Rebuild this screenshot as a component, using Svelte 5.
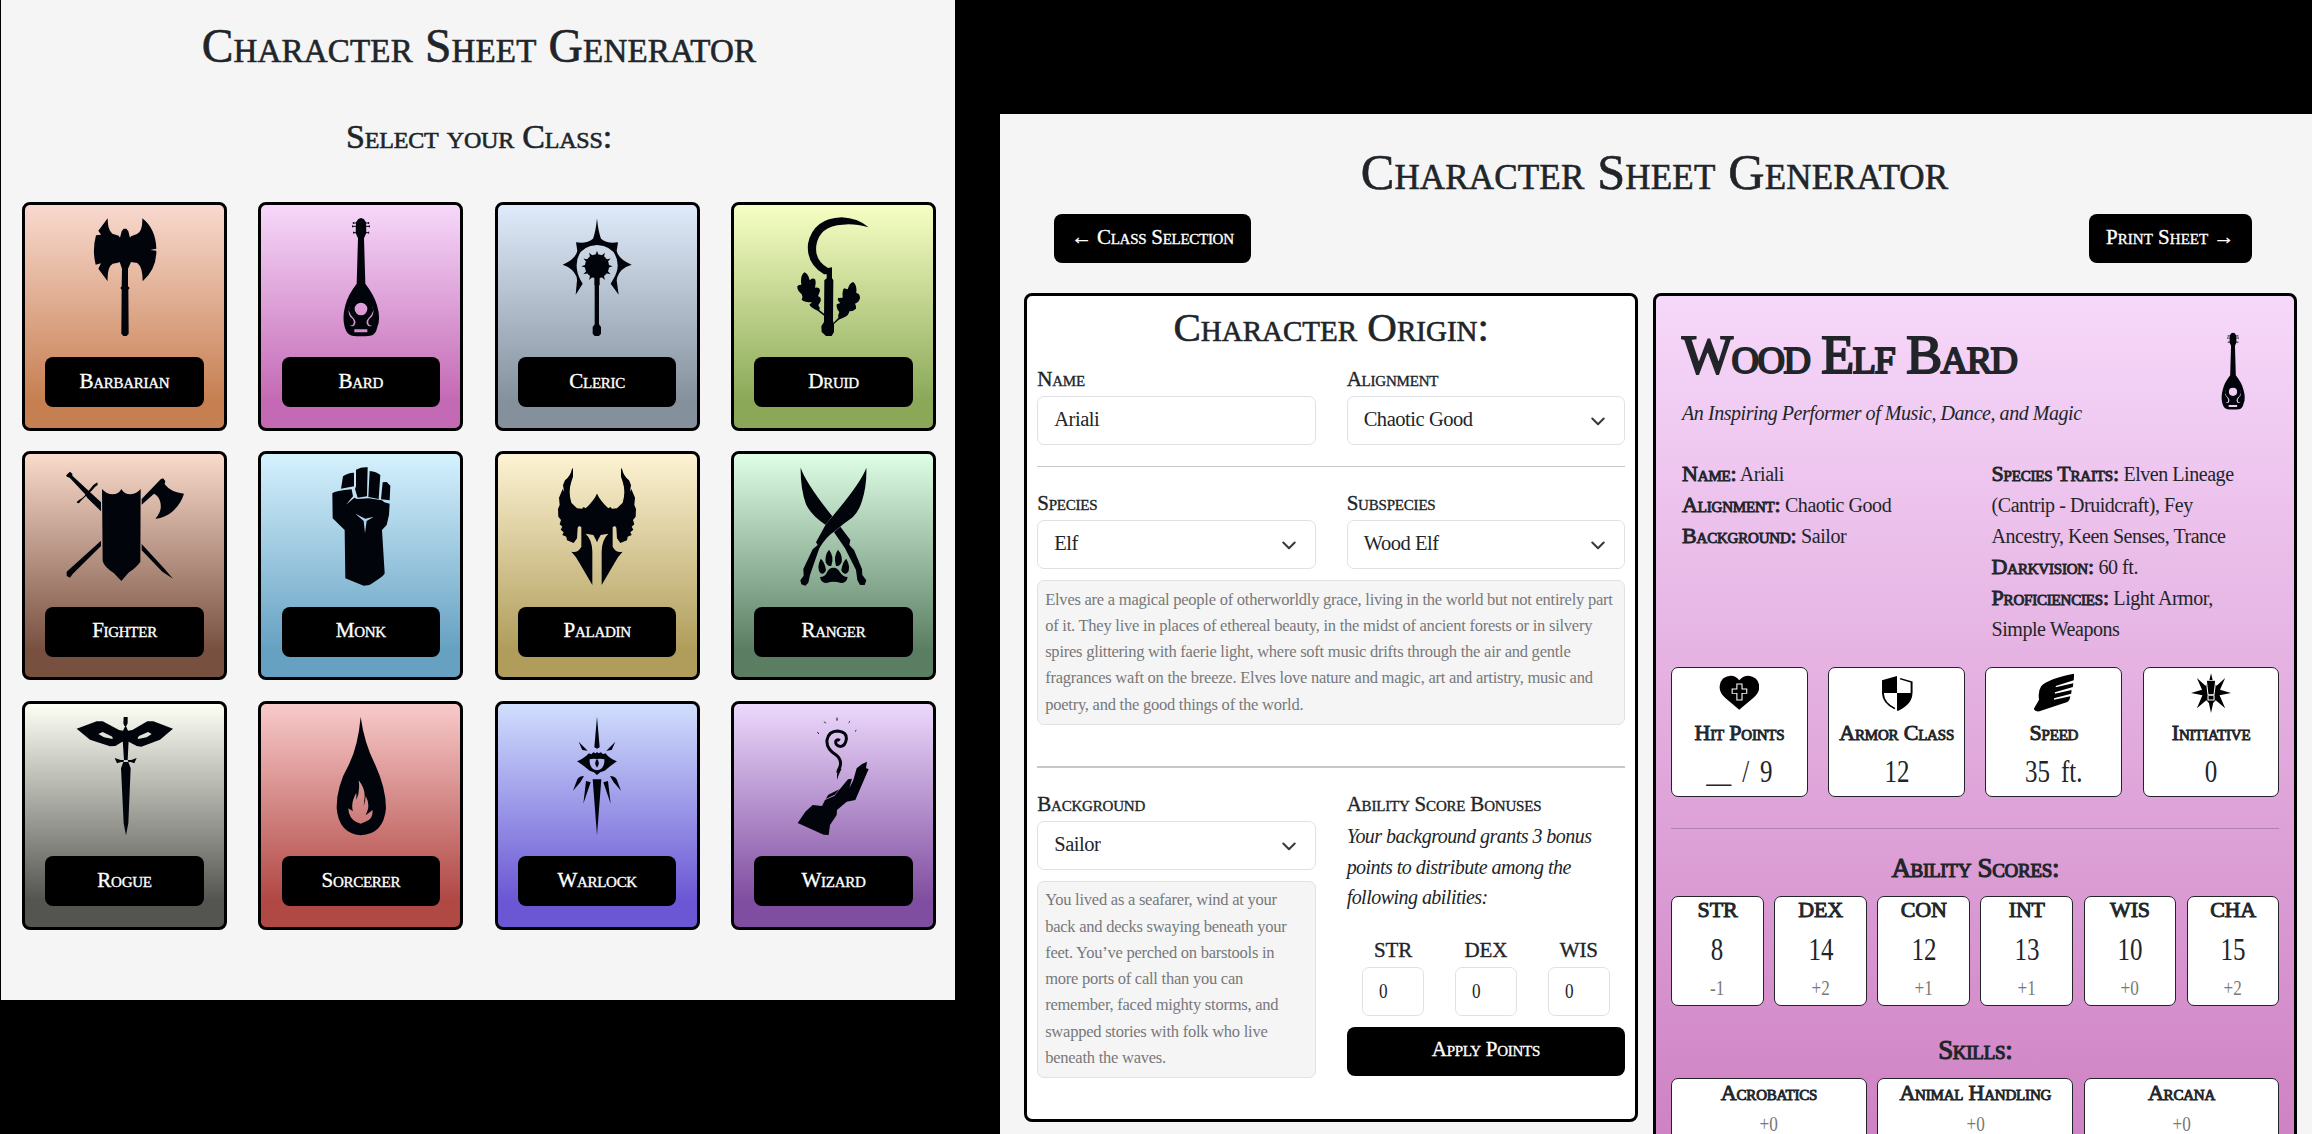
<script>
  const classes = [
    { id: 'barbarian', name: 'Barbarian', box: '133 50 360 360' },
    { id: 'bard', name: 'Bard', box: '842 50 360 360' },
    { id: 'cleric', name: 'Cleric', box: '142 50 360 360' },
    { id: 'druid', name: 'Druid', box: '851 50 360 360' },
    { id: 'fighter', name: 'Fighter', box: '133 33 360 360' },
    { id: 'monk', name: 'Monk', box: '842 33 360 360' },
    { id: 'paladin', name: 'Paladin', box: '142 33 360 360' },
    { id: 'ranger', name: 'Ranger', box: '851 33 360 360' },
    { id: 'rogue', name: 'Rogue', box: '133 48 360 360' },
    { id: 'sorcerer', name: 'Sorcerer', box: '842 48 360 360' },
    { id: 'warlock', name: 'Warlock', box: '142 48 360 360' },
    { id: 'wizard', name: 'Wizard', box: '851 48 360 360' }
  ];

  // Spiked head of the cleric's mace: a thin thorn every 30 degrees.
  const onMace = (angle, r) =>
    `${(322 + r * Math.sin(angle)).toFixed(1)},${(198 - r * Math.cos(angle)).toFixed(1)}`;
  const mace = Array.from({ length: 12 }, (_, i) => {
    const a = (i * Math.PI) / 6;
    return [onMace(a - 0.13, 34), onMace(a, 47), onMace(a + 0.13, 34)].join(' ');
  }).join(' ');

  const speciesText = [
    'Elves are a magical people of otherworldly grace, living in the world but not entirely part',
    'of it. They live in places of ethereal beauty, in the midst of ancient forests or in silvery',
    'spires glittering with faerie light, where soft music drifts through the air and gentle',
    'fragrances waft on the breeze. Elves love nature and magic, art and artistry, music and',
    'poetry, and the good things of the world.'
  ];
  const backgroundText = [
    'You lived as a seafarer, wind at your',
    'back and decks swaying beneath your',
    'feet. You’ve perched on barstools in',
    'more ports of call than you can',
    'remember, faced mighty storms, and',
    'swapped stories with folk who live',
    'beneath the waves.'
  ];
  const stats = [
    { icon: 'hp', box: '185.3 100 93.3 120', label: 'Hit Points', value: '__ / 9' },
    { icon: 'ac', box: '553.3 100 93.3 120', label: 'Armor Class', value: '12' },
    { icon: 'speed', box: '919.3 100 93.3 120', label: 'Speed', value: '35 ft.' },
    { icon: 'init', box: '1286.3 100 93.3 120', label: 'Initiative', value: '0' }
  ];
  const abilities = [
    ['STR', '8', '-1'],
    ['DEX', '14', '+2'],
    ['CON', '12', '+1'],
    ['INT', '13', '+1'],
    ['WIS', '10', '+0'],
    ['CHA', '15', '+2']
  ];
  const skills = [
    ['Acrobatics', '+0'],
    ['Animal Handling', '+0'],
    ['Arcana', '+0']
  ];
</script>

{#snippet emblem(id, box)}
  <svg class="emblem" viewBox={box} fill-rule="evenodd" aria-hidden="true">
    {#if id === 'barbarian'}
      <path d="M261 54L233 91L241 103L226 105Q214 150 225 193L241 189L233 205L261 243Q259 200 276 190L292 187L297 185L304 205L303 258L299 263L303 268L302 400L308 407H318L324 400L323 268L327 263L322 258V205L331 185L350 188Q366 200 366 243Q408 205 407 151L389 149L407 145Q405 85 365 54Q366 95 349 101L331 108L328 112L323 93L317 85H309L303 93L298 112L294 106L275 100Q261 90 261 54Z" />
    {:else if id === 'bard'}
      <path d="M1022 53L1030 56L1037 66L1038 98L1031 114L1035 250Q1062 285 1070 315Q1082 355 1071 380Q1066 405 1050 406Q1022 409 995 406Q980 404 973 380Q965 350 975 315Q982 285 1009 250L1013 114L1006 98L1007 66L1014 56ZM1003 326a19 19 0 1 0 38 0a19 19 0 1 0-38 0ZM1002 387h39v9h-39ZM991 319Q983 320 986 333Q990 346 1001 355Q1010 366 1001 376Q993 380 988 375Q996 377 999 371Q1003 362 995 354Q983 344 985 328Q986 320 991 319ZM1053 319Q1061 320 1058 333Q1054 346 1043 355Q1034 366 1043 376Q1051 380 1056 375Q1048 377 1045 371Q1041 362 1049 354Q1061 344 1059 328Q1058 320 1053 319Z" />
      <path class="line thin" d="M999 68h46M999 65v6M1045 65v6M997 78h50M997 75v6M1047 75v6M1000 97h44M1000 94v6M1045 94v6" />
    {:else if id === 'cleric'}
      <path d="M322 54Q326 95 334 115Q352 131 385 126L381 152Q388 178 426 193Q392 203 383 230L381 240L387 283L363 250L370 238Q385 215 384 193Q381 138 322 134Q263 138 261 193Q260 215 272 238L279 250L258 283L262 240L261 230Q250 203 219 193Q256 178 263 152L259 126Q292 131 310 115Q318 95 322 54Z" />
      <polygon points={mace} />
      <circle cx="322" cy="198" r="36" />
      <path d="M314 225H330V255H328V372L334 380V400L328 407H315L309 400V380L315 372V255H314Z" />
    {:else if id === 'druid'}
      <path d="M1138 81Q1105 53 1057 51Q972 54 956 130Q950 190 1004 222H1012V234L1005 240L1004 365L996 378L997 395L1010 407H1027L1034 395V370L1031 362L1032 240L1028 233V201L1016 203Q975 180 981 135Q990 77 1060 73Q1095 69 1138 81Z" />
      <path d="M945 216Q957 220 961 240Q970 230 978 238Q981 248 977 262Q992 260 992 272L986 288Q996 290 994 303L987 315Q993 322 990 329L1006 342L1004 346L985 331Q965 322 960 313L968 306Q945 306 937 298Q942 290 937 282Q922 270 924 258Q928 252 936 254Q932 225 945 216Z" />
      <path d="M1092 245Q1104 255 1101 278Q1112 280 1112 293Q1110 305 1097 310Q1102 318 1100 325Q1092 333 1080 333Q1078 346 1065 351L1048 358L1034 371L1033 367L1047 352Q1045 344 1050 335Q1040 325 1042 312L1053 308Q1043 300 1046 293L1060 292Q1058 272 1064 264L1075 267Q1080 248 1092 245Z" />
    {:else if id === 'fighter'}
      <path d="M244 102Q258 118 275 118Q295 118 302 102Q310 118 330 118Q348 116 360 102L359 320Q350 335 325 352L302 378L280 355Q250 335 246 318Z" />
      <path d="M137 60L148 50L155 56V62L241 142V169L200 129L192 116L147 68L138 65Z" />
      <path d="M168 141L175 135Q188 130 200 112Q212 98 218 90L230 82L231 90Q222 95 215 105L180 138Q178 146 170 144Z" />
      <path d="M363 267L430 340L457 371L425 350L363 286ZM241 257L138 350V363L148 368L156 357L241 273ZM363 132L420 73L427 70L434 78L432 88Q450 112 490 116Q480 150 450 174Q428 190 404 191Q428 165 417 135Q410 120 400 116L363 149Z" />
    {:else if id === 'monk'}
      <path d="M968 64Q985 52 1001 53V94L962 101ZM1007 44Q1025 35 1042 37L1040 124L1012 128L1004 102L1007 94ZM1048 48Q1068 50 1080 60L1075 132L1044 126ZM1087 82L1099 81L1110 92L1108 136L1082 133Z" />
      <path d="M936 115Q945 107 994 103L998 124L977 149L1002 128L1010 132L1045 130L1085 136L1092 142L1108 146L1106 180L1099 210L1085 225L1093 355Q1090 365 1047 390L1030 392L975 370L973 225L937 190ZM1005 176L1035 191L1060 185L1039 198L1034 235L1030 198Z" />
    {:else if id === 'paladin'}
      {#each ['', 'matrix(-1 0 0 1 644 0)'] as flip}
        <path transform={flip} d="M323 117H322Q310 140 288 160L282 156L277 161L262 160L245 143Q235 110 245 80L250 65V38L246 44Q244 60 226 76L220 90L223 110L219 102L208 128L210 150L205 162L206 185L214 195L210 208L218 215L213 224L222 232L218 240L230 245L232 256L252 264L262 250L264 218L268 213L275 216L275 275Q265 295 245 290Q260 305 268 322L308 390V290Q308 255 288 236L311 240L322 260H323Z" />
      {/each}
    {:else if id === 'ranger'}
      <path d="M934 38Q950 85 1029 184L1008 209Q965 180 950 148Q933 100 934 38ZM1034 232L1053 215L1083 255L1080 270L1094 285L1118 342L1119 360L1131 376L1126 390L1112 390L1104 375L1100 345L1067 280Z" />
      <path d="M1131 38Q1115 85 1010 207L980 262L985 270L970 283L942 342L943 362L933 376L936 388L948 392L957 383L962 360L990 280Q1010 245 1037 228Q1060 208 1090 187Q1108 170 1118 138Q1133 90 1131 38Z" />
      <path d="M1019 284Q1036 305 1026 332Q1015 336 1009 322Q1006 300 1019 284ZM1046 284Q1060 300 1057 322Q1050 336 1040 332Q1031 305 1046 284ZM994 311Q1006 320 1010 345Q1004 360 994 355Q980 340 994 311ZM1071 311Q1087 340 1073 355Q1062 360 1056 345Q1060 320 1071 311Z" />
      <path d="M1032 338Q1046 338 1052 352Q1060 366 1075 366Q1072 384 1055 384Q1032 377 1012 384Q995 384 992 366Q1008 366 1013 352Q1018 338 1032 338Z" />
    {:else if id === 'rogue'}
      <path d="M168 86L228 64L246 64L295 90L307 92L315 76L322 92L335 90L380 64L398 64L457 86L418 119L362 140L348 138L324 125H305L284 138L268 139L208 119ZM233 102L246 96L275 110L276 117L250 112ZM351 114L355 108L382 96L393 102L378 112L352 117Z" />
      <path d="M309 51H321V70L317 78H311L308 70ZM306 120H324L321 180L330 205L323 370L316 406L309 370L301 205L310 180ZM282 174L300 180H332L348 174L341 190L330 186H301L289 190Z" />
    {:else if id === 'sorcerer'}
      <path d="M1021 51Q1032 130 1065 195Q1097 265 1097 325Q1090 403 1021 406Q955 400 949 325Q948 260 985 195Q1013 140 1021 51ZM1015 241Q1034 265 1033 290L1030 318Q1036 300 1036 288Q1048 310 1042 330L1036 346L1057 330Q1058 360 1035 365L1021 371L1008 366Q985 355 984 325L998 334Q990 310 1008 278L1008 300Q1020 275 1015 241Z" />
    {:else if id === 'warlock'}
      <path d="M322 50L330 142L322 146L314 142ZM262 184Q280 178 298 160L305 163L311 157L318 160L322 156L327 160L334 157L340 163L347 160Q362 178 382 184Q365 195 345 212Q330 215 322 225Q314 215 300 212Q280 195 262 184ZM300 178Q298 207 322 211Q346 207 344 178Q335 175 322 177Q308 175 300 178ZM322 176Q333 190 322 203Q311 190 322 176ZM309 238H335L322 406Z" />
      {#each ['', 'matrix(-1 0 0 1 644 0)'] as flip}
        <path transform={flip} d="M267 125L294 152L278 150ZM283 228L272 247L250 272L263 238Q270 228 283 228ZM289 243L303 247L281 311Z" />
      {/each}
    {:else if id === 'wizard'}
      <path class="line curl" d="M1045 218Q1046 212 1052 200Q1058 180 1042 166Q1010 148 1013 120Q1018 93 1045 93Q1073 95 1071 118Q1067 141 1051 139Q1036 135 1040 122Q1045 116 1051 122" />
      <path d="M1048 206Q1040 225 1044 239Q1046 226 1057 206Z" />
      <path class="line thin" d="M1043 53V62M1005 65l4 5M1082 64l-4 4M984 97l5 4M1101 91l-4 3" />
      <path d="M925 369L948 335L970 315L998 318L1007 300L1035 288L1050 269L1076 238L1088 236L1080 265L1092 240L1102 205L1117 193L1133 185L1130 205L1138 207L1128 230L1098 300L1072 305L1043 330L1042 345L1022 375L1018 405L1003 404Z" />
      <path d="M1009 297L1017 284L1050 268L1036 284Z" />
    {/if}
  </svg>
{/snippet}

{#snippet chevron()}
  <svg class="chevron" viewBox="0 0 14 9" aria-hidden="true"><path d="M1.3 1.5L7 7.3L12.7 1.5" /></svg>
{/snippet}

<div class="page">
  <section class="picker">
    <h1>Character Sheet Generator</h1>
    <h2>Select your Class:</h2>
    <div class="classes">
      {#each classes as c}
        <article class="class-card {c.id}">
          {@render emblem(c.id, c.box)}
          <button>{c.name}</button>
        </article>
      {/each}
    </div>
  </section>

  <section class="builder">
    <h1>Character Sheet Generator</h1>
    <nav>
      <button>← Class Selection</button>
      <button class="print">Print Sheet →</button>
    </nav>
    <main>
      <form class="origin">
        <h2>Character Origin:</h2>
        <div class="pair">
          <div>
            <span class="label">Name</span>
            <div class="field"><span>Ariali</span></div>
          </div>
          <div>
            <span class="label">Alignment</span>
            <div class="field"><span>Chaotic Good</span>{@render chevron()}</div>
          </div>
        </div>
        <hr />
        <div class="pair">
          <div>
            <span class="label">Species</span>
            <div class="field"><span>Elf</span>{@render chevron()}</div>
          </div>
          <div>
            <span class="label">Subspecies</span>
            <div class="field"><span>Wood Elf</span>{@render chevron()}</div>
          </div>
        </div>
        <div class="note">
          {#each speciesText as line}<p>{line}</p>{/each}
        </div>
        <hr class="far" />
        <div class="pair">
          <div>
            <span class="label">Background</span>
            <div class="field"><span>Sailor</span>{@render chevron()}</div>
            <div class="note tall">
              {#each backgroundText as line}<p>{line}</p>{/each}
            </div>
          </div>
          <div>
            <span class="label">Ability Score Bonuses</span>
            <div class="hint">
              <p>Your background grants 3 bonus</p>
              <p>points to distribute among the</p>
              <p>following abilities:</p>
            </div>
            <div class="bonuses">
              {#each ['STR', 'DEX', 'WIS'] as a}
                <div class="bonus">
                  <span class="label">{a}</span>
                  <div class="field"><span class="digit">0</span></div>
                </div>
              {/each}
            </div>
            <button type="button" class="apply">Apply Points</button>
          </div>
        </div>
      </form>

      <article class="sheet">
        <header>
          <div>
            <h2>Wood Elf Bard</h2>
            <p class="tagline">An Inspiring Performer of Music, Dance, and Magic</p>
          </div>
          {@render emblem('bard', '842 50 360 360')}
        </header>
        <div class="facts">
          <div>
            <p><b>Name:</b> Ariali</p>
            <p><b>Alignment:</b> Chaotic Good</p>
            <p><b>Background:</b> Sailor</p>
          </div>
          <div>
            <p><b>Species Traits:</b> Elven Lineage</p>
            <p>(Cantrip - Druidcraft), Fey</p>
            <p>Ancestry, Keen Senses, Trance</p>
            <p><b>Darkvision:</b> 60 ft.</p>
            <p><b>Proficiencies:</b> Light Armor,</p>
            <p>Simple Weapons</p>
          </div>
        </div>
        <div class="stats">
          {#each stats as s}
            <div class="tile stat">
              <svg viewBox={s.box} preserveAspectRatio="none" aria-hidden="true">
                {#if s.icon === 'hp'}
                  <path d="M232.5 210L200 175Q185 158 187 138Q190 110 212 108Q226 108 232.5 122Q240 108 254 108Q277 112 279 138Q281 158 265 175Z" />
                  <path class="cut" d="M227 133h12v15h11v13h-11v20h-12v-20h-11v-13h11z" />
                {:else if s.icon === 'ac'}
                  <path d="M600 109L565 122V160H600ZM600 160H636Q636 193 603 213H600Z" />
                  <path class="rim" d="M607 117L634 127V160M567 160Q568 190 595 207" />
                {:else if s.icon === 'speed'}
                  <path d="M1013 102Q950 118 936 140Q928 155 931 180L919 207Q920 217 932 215L990 190Q1003 188 1004 170L966 180V176L1006 162L1007 151L968 162V158L1010 142L1011 131L970 143V139L1012 122Z" />
                {:else}
                  <path d="M1333 101L1338 128L1346 138L1366 115L1354 150L1380 160L1353 167L1366 206L1344 182L1338 190L1333 220L1328 190L1322 182L1300 206L1313 167L1286 160L1312 150L1300 115L1320 138L1328 128Z" />
                  <path class="cut" d="M1322 122h22l-4 43h-14zM1326 168h14v13h-14z" />
                {/if}
              </svg>
              <b>{s.label}</b>
              <span class="value">{s.value}</span>
            </div>
          {/each}
        </div>
        <hr />
        <h3>Ability Scores:</h3>
        <div class="abilities">
          {#each abilities as [name, score, mod]}
            <div class="tile ability">
              <b>{name}</b>
              <span class="value">{score}</span>
              <span class="mod">{mod}</span>
            </div>
          {/each}
        </div>
        <h3 class="skills-title">Skills:</h3>
        <div class="skills">
          {#each skills as [name, mod]}
            <div class="tile skill">
              <b>{name}</b>
              <span class="mod">{mod}</span>
            </div>
          {/each}
        </div>
      </article>
    </main>
  </section>
</div>

<style>
  :global(body) {
    background: #000;
    overflow: hidden;
  }
  .page {
    display: flex;
    align-items: flex-start;
    box-sizing: border-box;
    width: 2312px;
    height: 1134px;
    padding-left: 1px;
    overflow: hidden;
    background: #000;
    color: #212529;
    font-family: 'Liberation Serif', serif;
    font-size: 20px;
    letter-spacing: -0.45px;
    white-space: nowrap;
  }
  .page :global(*) {
    box-sizing: border-box;
  }
  h1, h2, h3, p {
    margin: 0;
    font-weight: 400;
  }
  h1, h2, h3, b, button, .label {
    font-variant: small-caps;
    letter-spacing: -0.2px;
    -webkit-text-stroke: 0.35px currentColor;
  }
  h1, h2, h3 {
    text-align: center;
  }
  h1, .picker h2, .origin h2 {
    letter-spacing: 0;
    -webkit-text-stroke-width: 0.6px;
  }
  button {
    height: 49px;
    border: 0;
    border-radius: 8px;
    padding: 0 17px 2.5px;
    background: #000;
    color: #fff;
    font-family: inherit;
    font-size: 21px;
    letter-spacing: -0.28px;
  }
  hr {
    width: 100%;
    height: 1.5px;
    border: 0;
    margin: 20.8px 0 23px;
    background: #c7c8c9;
  }

  .picker {
    flex: none;
    width: 954px;
    height: 1000px;
    padding: 16px 19px 0 21px;
    background: #f5f5f5;
  }
  .picker h1 {
    font-size: 47.5px;
    letter-spacing: 0.18px;
    line-height: 60px;
  }
  .picker h2 {
    margin: 41px 0 45px;
    font-size: 34px;
    letter-spacing: -0.2px;
    line-height: 40px;
  }
  .classes {
    display: grid;
    grid-template-columns: repeat(4, 205px);
    justify-content: space-between;
    row-gap: 20.7px;
  }
  .class-card {
    display: flex;
    flex-direction: column;
    align-items: center;
    height: 228.8px;
    border: 3px solid #000;
    border-radius: 8px;
    padding-top: 12px;
    background: linear-gradient(var(--from), var(--to) 88%);
  }
  .emblem {
    width: 120px;
    height: 120px;
    fill: #02040c;
  }
  .line {
    fill: none;
    stroke: #02040c;
  }
  .thin {
    stroke-width: 3;
  }
  .curl {
    stroke-width: 9;
  }
  .class-card button {
    width: 158.6px;
    height: 50px;
    margin-top: 20.3px;
  }
  .barbarian { --from: #f8d9cf; --to: #c67f50; }
  .bard { --from: #f6d8fa; --to: #c469b4; }
  .cleric { --from: #dfebfa; --to: #84909c; }
  .druid { --from: #f7ffc4; --to: #8aa858; }
  .fighter { --from: #f9dacb; --to: #775040; }
  .monk { --from: #d5f1fe; --to: #66a1c2; }
  .paladin { --from: #fdf3d3; --to: #b09d5b; }
  .ranger { --from: #defee6; --to: #5b7e63; }
  .rogue { --from: #fdfff5; --to: #545550; }
  .sorcerer { --from: #f8caca; --to: #b04844; }
  .warlock { --from: #d0defd; --to: #6b57d4; }
  .wizard { --from: #ecd8fc; --to: #804ea0; }

  .builder {
    flex: none;
    width: 1312px;
    height: 1020px;
    margin: 114px 0 0 45px;
    padding-top: 27.5px;
    overflow: hidden;
    background: #f5f5f5;
  }
  .builder h1 {
    font-size: 50.3px;
    letter-spacing: 0.18px;
    line-height: 60px;
    padding-right: 3px;
  }
  nav {
    display: flex;
    justify-content: space-between;
    padding: 12.5px 60px 30px 54.3px;
  }
  .print {
    padding-inline: 17.5px;
    letter-spacing: 0.02px;
  }
  main {
    display: grid;
    grid-template-columns: 613.6px 644px;
    align-items: start;
    gap: 15.3px;
    padding-left: 24.4px;
  }
  .origin {
    height: 829px;
    border: 3px solid #000;
    border-radius: 8px;
    padding: 6.3px 9.8px 0;
    background: #fff;
  }
  .origin h2 {
    margin-bottom: 13.7px;
    font-size: 41px;
    line-height: 50px;
  }
  .pair {
    display: grid;
    grid-template-columns: repeat(2, minmax(0, 1fr));
    gap: 30.9px;
  }
  .label {
    display: block;
    font-size: 21px;
    line-height: 26px;
  }
  .field {
    display: flex;
    align-items: center;
    justify-content: space-between;
    height: 48.4px;
    margin-top: 4.4px;
    border: 1px solid #dee2e6;
    border-radius: 7px;
    padding: 0 19px 1.5px 16px;
    background: #fff;
    font-size: 20.5px;
  }
  .chevron {
    width: 14px;
    height: 9px;
    margin-top: 3px;
    fill: none;
    stroke: #343a40;
    stroke-width: 2;
    stroke-linecap: round;
    stroke-linejoin: round;
  }
  .note {
    height: 145.4px;
    margin-top: 11.2px;
    border: 1px solid #dee2e6;
    border-radius: 7px;
    padding: 5.8px 7px;
    background: #f5f5f5;
    color: #77787a;
    font-size: 16.5px;
    letter-spacing: -0.24px;
    line-height: 26.2px;
  }
  .tall {
    height: 197.8px;
  }
  .far {
    margin-top: 40.8px;
  }
  .hint {
    margin-top: 4.2px;
    font-style: italic;
    letter-spacing: -0.53px;
    line-height: 30.6px;
  }
  .bonuses {
    display: grid;
    grid-template-columns: repeat(3, 1fr);
    margin: 24.3px 0 10.8px;
    text-align: center;
  }
  .bonus .field {
    width: 61.5px;
    margin-inline: auto;
  }
  .digit,
  .value,
  .mod {
    display: inline-block;
    letter-spacing: 0;
    transform: scaleX(0.78);
  }
  .digit {
    font-size: 22px;
    transform-origin: left;
  }
  .apply {
    display: block;
    width: 100%;
  }

  .sheet {
    height: 1240px;
    border: 3px solid #000;
    border-radius: 8px;
    padding: 28.5px 14.8px 0;
    background: linear-gradient(#f6d8fa, #c469b4 1080px);
  }
  header {
    display: flex;
    align-items: flex-start;
    justify-content: space-between;
    padding: 0 7.5px 0 11px;
  }
  header h2 {
    font-size: 54px;
    letter-spacing: -1.5px;
    line-height: 60px;
    text-align: left;
    -webkit-text-stroke-width: 2px;
  }
  .tagline {
    margin-top: 13.8px;
    font-style: italic;
    line-height: 30px;
  }
  header .emblem {
    width: 78px;
    height: 78px;
    margin-top: 7.2px;
  }
  .facts {
    display: grid;
    grid-template-columns: 309.5px 1fr;
    margin: 30.5px 0 21.3px;
    padding-left: 11px;
  }
  .facts p {
    height: 31.1px;
    line-height: 31.1px;
  }
  b {
    font-size: 22px;
    font-weight: 400;
    -webkit-text-stroke-width: 0.9px;
  }
  .facts b {
    line-height: 1;
  }
  .stats {
    display: grid;
    grid-template-columns: repeat(4, 1fr);
    gap: 20.4px;
  }
  .tile {
    display: flex;
    flex-direction: column;
    align-items: center;
    border: 1px solid #212529;
    border-radius: 7px;
    background: #fff;
  }
  .stat {
    height: 130px;
    padding-top: 5.6px;
  }
  .stat svg {
    width: 40px;
    height: 40px;
  }
  .cut {
    fill: #000;
    stroke: #fff;
    stroke-width: 2.5;
  }
  .rim {
    fill: none;
    stroke: #000;
    stroke-width: 4.5;
  }
  .tile b {
    font-size: 22px;
    line-height: 24px;
  }
  .stat b {
    margin-top: 7.6px;
  }
  .value {
    font-size: 32px;
    line-height: 36px;
    margin-top: 8.6px;
    word-spacing: 6px;
  }
  .mod {
    font-size: 22px;
    line-height: 24px;
    color: #77787a;
  }
  .sheet hr {
    height: 1px;
    margin: 31px 0 21px;
    background: #ac83ac;
  }
  h3 {
    margin-bottom: 10.7px;
    font-size: 27px;
    letter-spacing: -0.3px;
    line-height: 36px;
    -webkit-text-stroke-width: 1.1px;
  }
  .abilities {
    display: grid;
    grid-template-columns: repeat(6, 1fr);
    gap: 10.3px;
  }
  .ability {
    height: 109.4px;
    padding-top: 1px;
  }
  .ability .mod {
    margin-top: 8.8px;
  }
  .skills-title {
    margin-top: 25.9px;
  }
  .skills {
    display: grid;
    grid-template-columns: repeat(3, 1fr);
    gap: 10.3px;
  }
  .skill {
    height: 68px;
    padding-top: 1.7px;
  }
  .skill .mod {
    margin-top: 7px;
  }
</style>
